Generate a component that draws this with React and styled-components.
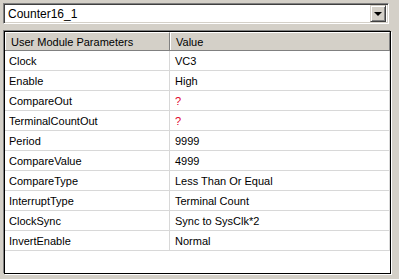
import React from 'react'
import styled, { createGlobalStyle } from 'styled-components'

const Global = createGlobalStyle`
  html, body {
    margin: 0;
    background: #d4d0c8;
  }
  body {
    font-family: "Liberation Sans", Arial, sans-serif;
    font-size: 11px;
    color: #000;
  }
`

const Page = styled.div`
  width: 399px;
  height: 279px;
  box-sizing: border-box;
  padding: 3px;
  display: flex;
  flex-direction: column;
  gap: 7px;
`

const Combo = styled.div`
  flex-shrink: 0;
  width: 386px;
  height: 21px;
  box-sizing: border-box;
  display: flex;
  align-items: center;
  background: #fff;
  border-top: 1px solid #808080;
  border-left: 1px solid #808080;
  border-right: 1px solid #fff;
  border-bottom: 1px solid #fff;
  box-shadow: inset 1px 1px 0 #404040, inset -1px -1px 0 #d4d0c8;
  padding: 0 2px 0 4px;
  font-size: 12px;
`

const ComboText = styled.span`
  flex: 1;
`

const DropButton = styled.div`
  width: 16px;
  height: 17px;
  box-sizing: border-box;
  display: flex;
  align-items: center;
  justify-content: center;
  background: #d4d0c8;
  border-top: 1px solid #d4d0c8;
  border-left: 1px solid #d4d0c8;
  border-right: 1px solid #404040;
  border-bottom: 1px solid #404040;
  box-shadow: inset 1px 1px 0 #fff, inset -1px -1px 0 #808080;
`

const Arrow = styled.div`
  width: 0;
  height: 0;
  border-left: 4px solid transparent;
  border-right: 4px solid transparent;
  border-top: 4px solid #000;
  margin-top: 1px;
`

const Grid = styled.div`
  flex-shrink: 0;
  width: 387px;
  height: 243px;
  margin-left: 1px;
  box-sizing: border-box;
  background: #fff;
  border: 1px solid #000;
  box-shadow: -1px -1px 0 #808080, 1px 1px 0 #fff;
`

const Row = styled.div`
  display: grid;
  grid-template-columns: 165px 1fr;
  height: ${p => (p.$head ? '19px' : '20px')};
  box-sizing: border-box;
  border-bottom: 1px solid ${p => (p.$head ? '#808080' : '#d8d8d8')};
`

const HeadCell = styled.div`
  display: flex;
  align-items: center;
  padding-left: 5px;
  background: #d4d0c8;
  border-top: 1px solid #fff;
  border-left: 1px solid #fff;
  border-right: 1px solid #808080;
`

const Cell = styled.div`
  display: flex;
  align-items: center;
  padding-left: ${p => (p.$value ? '5px' : '4px')};
  border-right: 1px solid #d8d8d8;
  color: ${p => (p.$missing ? '#e0002a' : '#000')};
  white-space: nowrap;
  overflow: hidden;
`

const params = [
  ['Clock', 'VC3'],
  ['Enable', 'High'],
  ['CompareOut', '?'],
  ['TerminalCountOut', '?'],
  ['Period', '9999'],
  ['CompareValue', '4999'],
  ['CompareType', 'Less Than Or Equal'],
  ['InterruptType', 'Terminal Count'],
  ['ClockSync', 'Sync to SysClk*2'],
  ['InvertEnable', 'Normal']
]

export default function App () {
  return (
    <>
      <Global />
      <Page>
        <Combo>
          <ComboText>Counter16_1</ComboText>
          <DropButton><Arrow /></DropButton>
        </Combo>
        <Grid>
          <Row $head>
            <HeadCell>User Module Parameters</HeadCell>
            <HeadCell>Value</HeadCell>
          </Row>
          {params.map(([name, value]) => (
            <Row key={name}>
              <Cell>{name}</Cell>
              <Cell $value $missing={value === '?'}>{value}</Cell>
            </Row>
          ))}
        </Grid>
      </Page>
    </>
  )
}
